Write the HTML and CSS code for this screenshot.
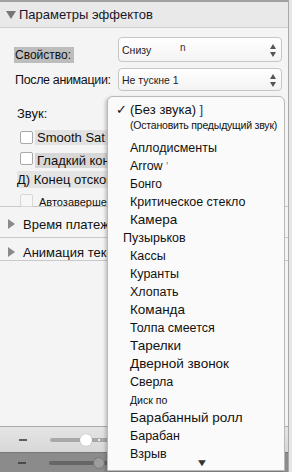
FILE: index.html
```html
<!DOCTYPE html>
<html lang="ru">
<head>
<meta charset="utf-8">
<link rel="stylesheet" href="styles.css">
</head>
<body>
<div class="panel">
  <div class="hdr">
    <span class="tri-down"></span>
    <span class="hdr-text">Параметры эффектов</span>
  </div>
  <div class="body">
    <div class="row r1">
      <div class="lblcell"><span class="lbl hl">Свойство:</span></div>
      <div class="select"><span class="val">Снизу</span><span class="mark">n</span><span class="arr"></span></div>
    </div>
    <div class="row r2">
      <div class="lblcell"><span class="lbl big">После анимации:</span></div>
      <div class="select"><span class="val">Не тускне 1</span><span class="arr"></span></div>
    </div>
    <div class="row r3">
      <div class="lblcell"><span class="lbl big z">Звук:</span></div>
    </div>
    <div class="checks">
      <label class="chk"><span class="box"></span><span class="ctext hl2">Smooth Sat</span></label>
      <label class="chk"><span class="box"></span><span class="ctext hl3">Гладкий конец</span></label>
      <div class="chk plain"><span class="ctext hl4">Д) Конец отскока</span></div>
      <label class="chk dim"><span class="box faded"></span><span class="ctext small">Автозавершение</span></label>
    </div>
  </div>
  <div class="sec s1"><span class="tri-right"></span><span class="sec-text">Время платежа</span></div>
  <div class="sec s2"><span class="tri-right"></span><span class="sec-text">Анимация текста</span></div>
  <div class="spacer"></div>
  <div class="zbar light">
    <span class="minus"></span>
    <span class="track"><span class="knob white"></span><span class="dot"></span></span>
  </div>
  <div class="zbar dark">
    <span class="minus"></span>
    <span class="track"><span class="knob grey"></span></span>
  </div>

  <div class="menu">
    <div class="mi first"><span class="check">✓</span>(Без звука) <span class="blue">]</span></div>
    <div class="mi second">(Остановить предыдущий звук)</div>
    <div class="list">
      <div class="mi">Аплодисменты</div>
      <div class="mi">Arrow <span class="tick">'</span></div>
      <div class="mi sm">Бонго</div>
      <div class="mi">Критическое стекло</div>
      <div class="mi lg">Камера</div>
      <div class="mi out">Пузырьков</div>
      <div class="mi">Кассы</div>
      <div class="mi">Куранты</div>
      <div class="mi">Хлопать</div>
      <div class="mi lg">Команда</div>
      <div class="mi">Толпа смеется</div>
      <div class="mi lg">Тарелки</div>
      <div class="mi lg">Дверной звонок</div>
      <div class="mi">Сверла</div>
      <div class="mi xs">Диск по</div>
      <div class="mi lg">Барабанный ролл</div>
      <div class="mi">Барабан</div>
      <div class="mi">Взрыв</div>
    </div>
    <div class="more">▼</div>
  </div>
</div>
</body>
</html>
```

FILE: styles.css
```css
* { box-sizing: border-box; }
html, body { margin: 0; padding: 0; }
body {
  width: 292px;
  height: 472px;
  overflow: hidden;
  background: #e6e6e6;
  font-family: "Liberation Sans", Arial, sans-serif;
  color: #111;
}
.panel {
  position: relative;
  width: 289px;
  height: 472px;
  background: #f4f4f4;
  border-right: 1px solid #a8a8a8;
  display: flex;
  flex-direction: column;
  overflow: hidden;
}
.hdr {
  height: 28px;
  flex: none;
  background: #e9e9e9;
  border-top: 2px solid #a0a0a0;
  border-bottom: 1px solid #cfcfcf;
  display: flex;
  align-items: center;
  padding-left: 6px;
  gap: 3px;
}
.tri-down {
  width: 0; height: 0;
  border-left: 5px solid transparent;
  border-right: 5px solid transparent;
  border-top: 8px solid #777;
  margin-top: 1px;
}
.hdr-text { font-size: 13px; color: #201528; }
.body {
  flex: none;
  height: 179px;
  border-bottom: 1px solid #c9c9c9;
  padding-top: 9px;
}
.row {
  display: flex;
  align-items: center;
  padding-left: 14px;
  padding-right: 6px;
}
.lblcell {
  width: 104px;
  flex: none;
  align-self: stretch;
  display: flex;
  align-items: center;
}
.r1 { height: 25px; }
.r1 .lblcell { align-items: flex-end; }
.r2 { height: 23px; margin-top: 6px; }
.r3 { height: 20px; margin-top: 12px; }
.lbl { font-size: 12px; white-space: nowrap; }
.lbl.hl {
  background: #bdbdbd;
  padding: 1px 3px 1px 1px;
  margin-bottom: -1px;
}
.lbl.big { font-size: 12.5px; letter-spacing: -0.35px; padding-left: 1px; }
.lbl.z { padding-left: 3px; font-size: 13px; letter-spacing: 0; }
.select {
  position: relative;
  flex: 1;
  height: 100%;
  border: 1px solid #c6c6c6;
  border-radius: 4px;
  background: linear-gradient(#ffffff, #f3f3f3);
  display: flex;
  align-items: center;
  padding-left: 3px;
  font-size: 10.5px;
  color: #222;
}
.mark { position: absolute; left: 61px; top: 4px; font-size: 10px; color: #333; }
.arr {
  position: absolute;
  right: 4px;
  top: 50%;
  width: 7px;
  height: 13px;
  margin-top: -6px;
}
.arr::before, .arr::after {
  content: "";
  position: absolute;
  left: 0;
  border-left: 3.5px solid transparent;
  border-right: 3.5px solid transparent;
}
.arr::before { top: 0; border-bottom: 5px solid #555; }
.arr::after { bottom: 0; border-top: 5px solid #555; }
.checks {
  display: flex;
  flex-direction: column;
  padding-left: 20px;
  margin-top: 4px;
}
.chk {
  display: flex;
  align-items: center;
  height: 21px;
  gap: 2px;
  white-space: nowrap;
}
.box {
  width: 13px; height: 13px;
  border: 1px solid #a8a8a8;
  border-radius: 2px;
  background: #fff;
  flex: none;
}
.box.faded { border-color: #d8d8d8; background: #f7f7f7; }
.ctext { font-size: 13px; padding: 0 2px; }
.hl2 { background: #e2e2e2; }
.hl3 { background: #d7d7d7; margin-top: 4px; }
.plain { margin-left: -3px; }
.hl4 { background: #e4e4e4; padding: 1px 1px 1px 0; }
.small { font-size: 11px; margin-left: 2px; margin-top: 2px; }
.sec {
  flex: none;
  display: flex;
  align-items: center;
  gap: 8px;
  padding-left: 8px;
  border-bottom: 1px solid #c9c9c9;
  font-size: 13px;
}
.s1 { height: 31px; padding-top: 4px; }
.s2 { height: 23px; padding-top: 6px; }
.tri-right {
  width: 0; height: 0;
  border-top: 5px solid transparent;
  border-bottom: 5px solid transparent;
  border-left: 7px solid #8a8a8a;
}
.spacer { flex: 1; }
.zbar {
  flex: none;
  display: flex;
  align-items: center;
  padding-left: 19px;
  gap: 23px;
}
.zbar.light {
  height: 26px;
  background: linear-gradient(#e4e4e4, #d8d8d8);
  border-top: 1px solid #aaa;
}
.zbar.dark {
  height: 20px;
  background: #8b8b8b;
  border-top: 1px solid #777;
  padding-left: 18px;
}
.minus { width: 8px; height: 2px; background: #5e5e5e; flex: none; }
.dark .minus { background: #4a4a4a; }
.track {
  position: relative;
  width: 110px;
  height: 4px;
  border-radius: 2px;
  background: #a9a9a9;
}
.dark .track { background: #666; }
.knob {
  position: absolute;
  top: 50%;
  width: 12px;
  height: 12px;
  margin-top: -6px;
  border-radius: 50%;
}
.knob.white { left: 30px; background: #fff; box-shadow: 0 0 1px #888; }
.knob.grey { left: 44px; background: #9c9c9c; border: 1px solid #777; }
.dot { position: absolute; left: 48px; top: 1px; width: 2px; height: 2px; background: #eee; }

.menu {
  position: absolute;
  left: 107px;
  top: 96px;
  width: 178px;
  height: 375px;
  background: #fafafa;
  border: 1px solid #b9b9b9;
  border-radius: 6px 6px 0 0;
  box-shadow: -2px 1px 3px rgba(0,0,0,0.18);
  padding-left: 22px;
  padding-top: 5px;
}
.mi {
  position: relative;
  font-size: 12.5px;
  height: 18px;
  line-height: 18px;
  white-space: nowrap;
  color: #111;
}
.mi.first { font-size: 13px; height: 16px; line-height: 16px; }
.mi.second { font-size: 10.5px; letter-spacing: -0.2px; height: 14px; line-height: 14px; }
.check { position: absolute; left: -14px; top: 0; font-size: 13px; }
.blue { color: #2a3a8a; }
.tick { color: #777; font-size: 10px; }
.list { margin-top: 7px; }
.mi.lg { font-size: 13.5px; }
.mi.sm { font-size: 12px; }
.mi.xs { font-size: 10.5px; }
.mi.out { margin-left: -7px; }
.more {
  position: absolute;
  left: 89px;
  bottom: 2px;
  font-size: 10px;
  color: #333;
  transform: scaleX(1.3);
}
```
